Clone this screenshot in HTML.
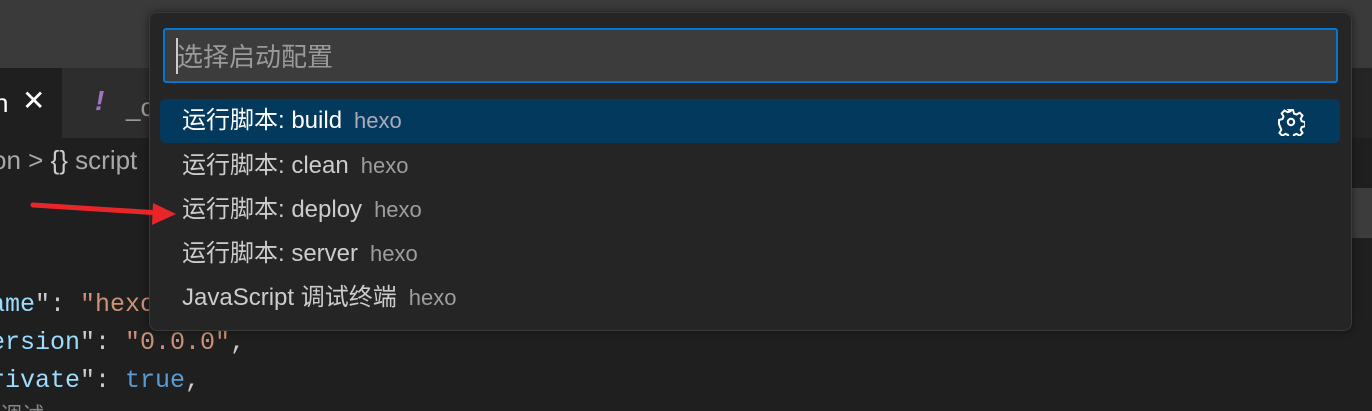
<!DOCTYPE html>
<html><head><meta charset="utf-8"><style>
*{margin:0;padding:0;box-sizing:border-box}
html,body{width:1372px;height:411px;overflow:hidden}
body{background:#1f1f1f;position:relative;font-family:"Liberation Sans","Noto Sans CJK SC",sans-serif}
.abs{position:absolute}
.code{font-family:"Liberation Mono","DejaVu Sans Mono",monospace;font-size:25px;white-space:pre;color:#9cdcfe}
.row{position:absolute;left:160px;width:1180px;height:44px;line-height:44px;padding-left:22px;font-size:24px;color:#cccccc;font-family:"Liberation Sans","Noto Sans CJK SC",sans-serif}
.row .d{color:#9d9d9d;font-size:22px;margin-left:12px}
</style></head><body>
<div class="abs" style="left:0;top:0;width:1372px;height:68px;background:#3a3a3a"></div>
<div class="abs" style="left:0;top:68px;width:1372px;height:70px;background:#252526"></div>
<div class="abs" style="left:0;top:68px;width:62px;height:70px;background:#1f1f1f"></div>
<div class="abs" style="left:62px;top:68px;width:90px;height:70px;background:#2d2d2d"></div>
<div class="abs" style="left:-6px;top:88px;color:#fff;font-size:26px">n</div>
<div class="abs" style="left:22px;top:84px;color:#fff;font-size:28px">✕</div>
<div class="abs" style="left:95px;top:85px;color:#a074c4;font-size:28px;font-style:italic;font-weight:bold">!</div>
<div class="abs" style="left:126px;top:92px;color:#9a9a9a;font-size:26px">_c</div>
<div class="abs" style="left:-8px;top:145px;color:#a9a9a9;font-size:26px">on &gt; <span style="color:#ccc">{}</span> script</div>
<div class="abs" style="left:1352px;top:188px;width:20px;height:50px;background:#3c3c3c"></div>
<div class="abs code" style="left:-10px;top:290px">ame<span style="color:#ccc">": </span><span style="color:#ce9178">"hexo</span></div>
<div class="abs code" style="left:-10px;top:328px">ersion<span style="color:#ccc">": </span><span style="color:#ce9178">"0.0.0"</span><span style="color:#ccc">,</span></div>
<div class="abs code" style="left:-10px;top:366px">rivate<span style="color:#ccc">": </span><span style="color:#569cd6">true</span><span style="color:#ccc">,</span></div>
<div class="abs" style="left:0;top:398px;color:#888;font-size:22px">调试</div>
<div class="abs" style="left:149px;top:12px;width:1203px;height:319px;background:#252526;border:1px solid #3a3a3a;border-radius:8px;box-shadow:0 0 8px rgba(0,0,0,.5)"></div>
<div class="abs" style="left:163px;top:28px;width:1175px;height:55px;background:#3c3c3c;border:2px solid #0078d4;border-radius:3px"></div>
<div class="abs" style="left:176px;top:38px;width:2px;height:36px;background:#ccc"></div>
<div class="abs" style="left:177px;top:38px;color:#9a9a9a;font-size:26px;font-family:'Noto Sans CJK SC',sans-serif;line-height:36px">选择启动配置</div>
<div class="row" style="top:99px;background:#04395e;border-radius:6px;color:#fff">运行脚本: build<span class="d" style="color:#aab">hexo</span>
<svg style="position:absolute;left:1117px;top:9px" width="28" height="28" viewBox="0 0 28 28"><path d="M12 2h4l1 3.5 2.5 1 3.2-1.8 2.8 2.8-1.8 3.2 1 2.5 3.5 1v4l-3.5 1-1 2.5 1.8 3.2-2.8 2.8-3.2-1.8-2.5 1-1 3.5h-4l-1-3.5-2.5-1-3.2 1.8-2.8-2.8 1.8-3.2-1-2.5L2 16v-4l3.5-1 1-2.5-1.8-3.2 2.8-2.8 3.2 1.8 2.5-1z" fill="none" stroke="#fff" stroke-width="2"/><circle cx="14" cy="14" r="3.2" fill="none" stroke="#fff" stroke-width="2"/></svg></div>
<div class="row" style="top:144px">运行脚本: clean<span class="d">hexo</span></div>
<div class="row" style="top:188px">运行脚本: deploy<span class="d">hexo</span></div>
<div class="row" style="top:232px">运行脚本: server<span class="d">hexo</span></div>
<div class="row" style="top:276px">JavaScript 调试终端<span class="d">hexo</span></div>
<svg class="abs" style="left:0;top:0" width="200" height="240"><line x1="33" y1="205" x2="160" y2="213" stroke="#e8262a" stroke-width="5" stroke-linecap="round"/><polygon points="176,214 153,203 152,225" fill="#e8262a"/></svg>
</body></html>
